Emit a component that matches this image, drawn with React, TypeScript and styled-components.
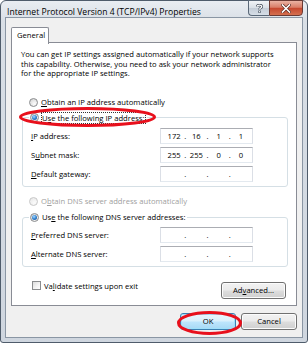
import React from "react";
import styled, { createGlobalStyle } from "styled-components";

const Global = createGlobalStyle`
  html, body { margin: 0; padding: 0; background: #ffffff; }
  body {
    font-family: "Open Sans", "Noto Sans", sans-serif;
    font-size: 7.65px;
    color: #000;
  }
  #root { width: 308px; height: 343px; }
`;

const Window = styled.div`
  position: relative;
  box-sizing: border-box;
  width: 308px;
  height: 343px;
  border: 1px solid #4f5c6b;
  border-radius: 6px 6px 3px 3px;
  background: linear-gradient(180deg, #e9edf2 0%, #d9dfe6 6%, #cfd6df 100%);
  padding: 0 4px 4px 4px;
  display: flex;
  flex-direction: column;
`;

const TitleBar = styled.div`
  height: 16px;
  display: flex;
  align-items: flex-start;
  justify-content: space-between;
`;

const Title = styled.div`
  margin-top: 5px;
  padding-left: 2px;
  line-height: 12px;
  font-size: 8.6px;
  white-space: nowrap;
`;

const CaptionButtons = styled.div`
  display: flex;
  margin-top: -1px;
`;

const HelpButton = styled.div`
  box-sizing: border-box;
  width: 21px;
  height: 16px;
  border: 1px solid #5a6878;
  border-right: none;
  border-radius: 0 0 0 4px;
  background: linear-gradient(180deg, #f1f4f7 0%, #d9e0e7 48%, #c4cdd7 52%, #d6dee7 100%);
  display: flex;
  align-items: center;
  justify-content: center;
`;

const CloseButton = styled.div`
  box-sizing: border-box;
  width: 34px;
  height: 16px;
  border: 1px solid #6b3a34;
  border-radius: 0 0 4px 0;
  background: linear-gradient(180deg, #eab3a4 0%, #d97e68 45%, #c6482f 52%, #d4704f 100%);
  display: flex;
  align-items: center;
  justify-content: center;
`;

const Client = styled.div`
  flex: 1;
  box-sizing: border-box;
  border: 1px solid #8a96a4;
  background: #f0f0f0;
  padding: 9px 5px 0 5px;
  display: flex;
  flex-direction: column;
`;

const TabStrip = styled.div`
  display: flex;
  height: 16px;
  margin-bottom: -1px;
  position: relative;
  z-index: 1;
`;

const Tab = styled.div`
  box-sizing: border-box;
  width: 38px;
  height: 17px;
  border: 1px solid #898c95;
  border-bottom: none;
  background: #ffffff;
  padding-left: 5px;
  line-height: 15px;
  border-radius: 2px 2px 0 0;
`;

const Panel = styled.div`
  box-sizing: border-box;
  height: 264px;
  border: 1px solid #898c95;
  background: #ffffff;
  padding: 7px 0 0 0;
  display: flex;
  flex-direction: column;
`;

const Description = styled.div`
  padding-left: 9px;
  line-height: 9.6px;
  white-space: nowrap;
`;

const RadioRow = styled.div<{ $disabled?: boolean }>`
  display: flex;
  align-items: center;
  height: 12px;
  gap: 3px;
  padding-left: 17px;
  color: ${(p) => (p.$disabled ? "#a0a0a0" : "#000")};
`;

const RadioCircle = styled.span<{ $checked?: boolean; $disabled?: boolean }>`
  box-sizing: border-box;
  flex: none;
  width: 9px;
  height: 9px;
  border-radius: 50%;
  border: 1px solid ${(p) => (p.$disabled ? "#c8c8c8" : "#8a8c8e")};
  background: ${(p) =>
    p.$disabled
      ? "radial-gradient(circle at 65% 70%, #fbfbfb 0%, #ececec 70%, #e0e0e0 100%)"
      : "radial-gradient(circle at 65% 70%, #fdfdfd 0%, #e2e2e2 60%, #c9c9c9 100%)"};
  display: flex;
  align-items: center;
  justify-content: center;
  &::after {
    content: "";
    display: ${(p) => (p.$checked ? "block" : "none")};
    width: 5px;
    height: 5px;
    border-radius: 50%;
    background: radial-gradient(circle at 40% 35%, #a9dcff 0%, #3a8ad8 45%, #0e3f7c 100%);
  }
`;

const FocusText = styled.span`
  outline: 1px dotted #333;
  outline-offset: 0px;
  line-height: 10px;
`;

const Group = styled.fieldset<{ $top: number }>`
  position: relative;
  margin: ${(p) => p.$top}px 8px 0 10px;
  padding: 4px 0 4px 8px;
  border: 1px solid #d5dfe5;
  border-radius: 3px;
  min-width: 0;
`;

const Legend = styled.legend`
  position: relative;
  margin-left: -2px;
  padding: 0 2px 0 1px;
  height: 12px;
  display: flex;
  align-items: center;
  gap: 3px;
`;

const FieldRows = styled.div`
  display: flex;
  flex-direction: column;
  gap: 3px;
`;

const FieldRow = styled.div`
  display: grid;
  grid-template-columns: 129px 93px;
  align-items: center;
  height: 16px;
`;

const IpBox = styled.div`
  box-sizing: border-box;
  width: 93px;
  height: 16px;
  border: 1px solid #dbdfe6;
  border-top-color: #abadb3;
  border-bottom-color: #e3e9ef;
  background: #ffffff;
  display: flex;
  align-items: center;
  padding: 0 2px 0 4px;
`;

const Segment = styled.span`
  flex: 1;
  text-align: center;
`;

const Dot = styled.span`
  width: 4px;
  text-align: center;
`;

const BottomRow = styled.div`
  display: flex;
  align-items: flex-start;
  justify-content: space-between;
  margin-top: 15px;
  padding: 0 10px 0 20px;
`;

const CheckLabel = styled.div`
  display: flex;
  align-items: center;
  gap: 3px;
  height: 9px;
  margin-top: -1px;
`;

const CheckBox = styled.span`
  box-sizing: border-box;
  width: 9px;
  height: 9px;
  border: 1px solid #8a8c8e;
  background: linear-gradient(135deg, #dcdcdc 0%, #f4f4f4 60%, #ffffff 100%);
`;

const Button = styled.div<{ $width: number; $default?: boolean }>`
  position: relative;
  box-sizing: border-box;
  width: ${(p) => p.$width}px;
  height: 17px;
  border: 1px solid ${(p) => (p.$default ? "#3c7fb1" : "#707070")};
  border-radius: 3px;
  background: ${(p) =>
    p.$default
      ? "linear-gradient(180deg, #eaf6fd 0%, #d9f0fc 48%, #bee6fd 52%, #a7d9f5 100%)"
      : "linear-gradient(180deg, #f2f2f2 0%, #ebebeb 48%, #dddddd 52%, #cfcfcf 100%)"};
  box-shadow: inset 0 0 0 1px ${(p) => (p.$default ? "#9fe0fb" : "#fcfcfc")};
  display: flex;
  align-items: center;
  justify-content: center;
  line-height: 15px;
`;

const DialogButtons = styled.div`
  display: flex;
  justify-content: flex-end;
  gap: 5px;
  margin-top: 7px;
`;

const Ellipse = styled.svg<{ $left: number; $top: number }>`
  position: absolute;
  left: ${(p) => p.$left}px;
  top: ${(p) => p.$top}px;
  overflow: visible;
  pointer-events: none;
  z-index: 5;
`;

function RedEllipse({ left, top, w, h }: { left: number; top: number; w: number; h: number }) {
  return (
    <Ellipse $left={left} $top={top} width={w} height={h}>
      <ellipse cx={w / 2} cy={h / 2} rx={w / 2 - 1.5} ry={h / 2 - 1.5} fill="none" stroke="#e8101c" strokeWidth={3} />
    </Ellipse>
  );
}

function IpField({ parts }: { parts: string[] }) {
  return (
    <IpBox>
      <Segment>{parts[0]}</Segment>
      <Dot>.</Dot>
      <Segment>{parts[1]}</Segment>
      <Dot>.</Dot>
      <Segment>{parts[2]}</Segment>
      <Dot>.</Dot>
      <Segment>{parts[3]}</Segment>
    </IpBox>
  );
}

export default function App() {
  return (
    <>
      <Global />
      <Window>
        <TitleBar>
          <Title>Internet Protocol Version 4 (TCP/IPv4) Properties</Title>
          <CaptionButtons>
            <HelpButton>
              <svg width="7" height="9" viewBox="0 0 7 9">
                <path d="M1.2 2.6 C1.2 0.6 5.8 0.6 5.8 2.6 C5.8 4 3.5 4 3.5 5.6" fill="none" stroke="#3a4654" strokeWidth="2.6" />
                <path d="M1.2 2.6 C1.2 0.6 5.8 0.6 5.8 2.6 C5.8 4 3.5 4 3.5 5.6" fill="none" stroke="#ffffff" strokeWidth="1.3" />
                <rect x="2.3" y="6.6" width="2.4" height="2.2" fill="#3a4654" />
                <rect x="2.9" y="7.1" width="1.2" height="1.2" fill="#ffffff" />
              </svg>
            </HelpButton>
            <CloseButton>
              <svg width="10" height="9" viewBox="0 0 10 9">
                <path d="M1.5 1 L8.5 8 M8.5 1 L1.5 8" stroke="#5a2a22" strokeWidth="3" strokeLinecap="square" />
                <path d="M1.5 1 L8.5 8 M8.5 1 L1.5 8" stroke="#ffffff" strokeWidth="1.6" strokeLinecap="square" />
              </svg>
            </CloseButton>
          </CaptionButtons>
        </TitleBar>
        <Client>
          <TabStrip>
            <Tab>General</Tab>
          </TabStrip>
          <Panel>
            <Description>
              You can get IP settings assigned automatically if your network supports
              <br />
              this capability. Otherwise, you need to ask your network administrator
              <br />
              for the appropriate IP settings.
            </Description>
            <RadioRow style={{ marginTop: 17.5 }}>
              <RadioCircle />
              <span>
                <u>O</u>btain an IP address automatically
              </span>
            </RadioRow>
            <Group $top={3.5}>
              <Legend>
                <RadioCircle $checked />
                <FocusText>
                  U<u>s</u>e the following IP address:
                </FocusText>
                <RedEllipse left={-10} top={-4.5} w={137} h={20} />
              </Legend>
              <FieldRows>
                <FieldRow>
                  <span>
                    <u>I</u>P address:
                  </span>
                  <IpField parts={["172", "16", "1", "1"]} />
                </FieldRow>
                <FieldRow>
                  <span>
                    S<u>u</u>bnet mask:
                  </span>
                  <IpField parts={["255", "255", "0", "0"]} />
                </FieldRow>
                <FieldRow>
                  <span>
                    <u>D</u>efault gateway:
                  </span>
                  <IpField parts={["", "", "", ""]} />
                </FieldRow>
              </FieldRows>
            </Group>
            <RadioRow $disabled style={{ marginTop: 8.5 }}>
              <RadioCircle $disabled />
              <span>
                O<u>b</u>tain DNS server address automatically
              </span>
            </RadioRow>
            <Group $top={4}>
              <Legend>
                <RadioCircle $checked />
                <span>
                  Us<u>e</u> the following DNS server addresses:
                </span>
              </Legend>
              <FieldRows>
                <FieldRow>
                  <span>
                    <u>P</u>referred DNS server:
                  </span>
                  <IpField parts={["", "", "", ""]} />
                </FieldRow>
                <FieldRow>
                  <span>
                    <u>A</u>lternate DNS server:
                  </span>
                  <IpField parts={["", "", "", ""]} />
                </FieldRow>
              </FieldRows>
            </Group>
            <BottomRow>
              <CheckLabel>
                <CheckBox />
                <span>
                  Va<u>l</u>idate settings upon exit
                </span>
              </CheckLabel>
              <Button $width={65}>
                <span>
                  Ad<u>v</u>anced...
                </span>
              </Button>
            </BottomRow>
          </Panel>
          <DialogButtons>
            <Button $width={56} $default>
              OK
              <RedEllipse left={-4} top={-3} w={65} h={24} />
            </Button>
            <Button $width={56}>Cancel</Button>
          </DialogButtons>
        </Client>
      </Window>
    </>
  );
}
